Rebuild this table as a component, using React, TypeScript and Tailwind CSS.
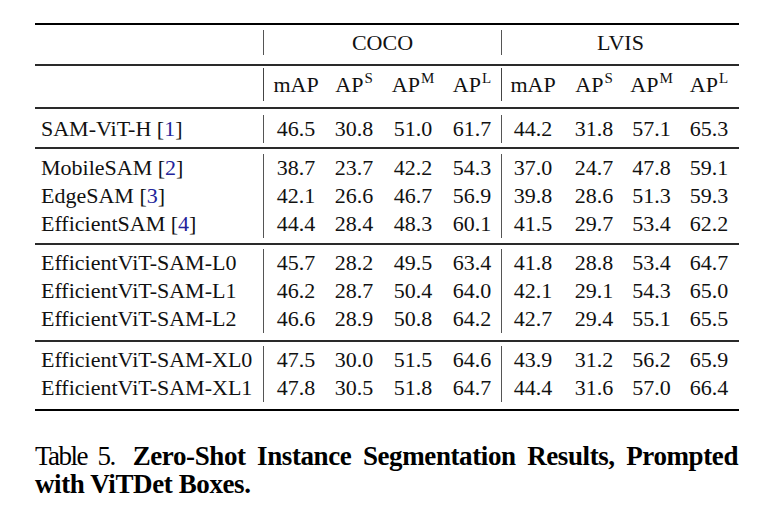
import React from "react";

type Row = { name: string; cite?: string; coco: string[]; lvis: string[] };

// column widths tuned so the figures sit under their headers
const cocoW = ["w-[64px]", "w-[52px]", "w-[66px]", "w-[55px] pr-[3px]"];
const lvisW = ["w-[62px]", "w-[60px]", "w-[55px]", "w-[60px]"];

const groups: { rows: Row[]; pad: string }[] = [
  {
    pad: "pt-[6px] pb-[4px]",
    rows: [{ name: "SAM-ViT-H", cite: "1", coco: ["46.5", "30.8", "51.0", "61.7"], lvis: ["44.2", "31.8", "57.1", "65.3"] }],
  },
  {
    pad: "pt-[5px] pb-[5px]",
    rows: [
      { name: "MobileSAM", cite: "2", coco: ["38.7", "23.7", "42.2", "54.3"], lvis: ["37.0", "24.7", "47.8", "59.1"] },
      { name: "EdgeSAM", cite: "3", coco: ["42.1", "26.6", "46.7", "56.9"], lvis: ["39.8", "28.6", "51.3", "59.3"] },
      { name: "EfficientSAM", cite: "4", coco: ["44.4", "28.4", "48.3", "60.1"], lvis: ["41.5", "29.7", "53.4", "62.2"] },
    ],
  },
  {
    pad: "pt-[4px] pb-[7px]",
    rows: [
      { name: "EfficientViT-SAM-L0", coco: ["45.7", "28.2", "49.5", "63.4"], lvis: ["41.8", "28.8", "53.4", "64.7"] },
      { name: "EfficientViT-SAM-L1", coco: ["46.2", "28.7", "50.4", "64.0"], lvis: ["42.1", "29.1", "54.3", "65.0"] },
      { name: "EfficientViT-SAM-L2", coco: ["46.6", "28.9", "50.8", "64.2"], lvis: ["42.7", "29.4", "55.1", "65.5"] },
    ],
  },
  {
    pad: "pt-[4px] pb-[7px]",
    rows: [
      { name: "EfficientViT-SAM-XL0", coco: ["47.5", "30.0", "51.5", "64.6"], lvis: ["43.9", "31.2", "56.2", "65.9"] },
      { name: "EfficientViT-SAM-XL1", coco: ["47.8", "30.5", "51.8", "64.7"], lvis: ["44.4", "31.6", "57.0", "66.4"] },
    ],
  },
];

const heads = [
  { t: "mAP" },
  { t: "AP", s: "S" },
  { t: "AP", s: "M" },
  { t: "AP", s: "L" },
];

function Head({ t, s }: { t: string; s?: string }) {
  return (
    <span>
      {t}
      {s && <sup className="text-[15px] -top-[9px] ml-[1px]">{s}</sup>}
    </span>
  );
}

function MidRule() {
  return <div className="h-[2px] bg-[#2a2a2a]" />;
}

function DataRow({ row }: { row: Row }) {
  return (
    <div className="flex h-[28px] leading-[28px]">
      <div className="w-[228px] pl-[6px] whitespace-nowrap">
        {row.name}
        {row.cite && (
          <>
            {" ["}
            <span className="text-[#23239a]">{row.cite}</span>
            {"]"}
          </>
        )}
      </div>
      <div className="flex border-l border-[#555]">
        {row.coco.map((v, i) => (
          <div key={i} className={`${cocoW[i]} text-center`}>
            {v}
          </div>
        ))}
      </div>
      <div className="flex border-l border-[#555]">
        {row.lvis.map((v, i) => (
          <div key={i} className={`${lvisW[i]} text-center`}>
            {v}
          </div>
        ))}
      </div>
    </div>
  );
}

export default function App() {
  return (
    <div className="w-[768px] h-[522px] bg-white text-[#111] font-['Liberation_Serif',serif] pt-[23px] px-[35px] overflow-hidden">
      <div className="w-[704px] text-[22px]">
        <div className="h-[2px] bg-black" />

        <div className="flex pt-[5px] pb-[9px] leading-[25px]">
          <div className="w-[228px]" />
          <div className="w-[238px] border-l border-[#555] text-center">COCO</div>
          <div className="w-[238px] border-l border-[#555] text-center">LVIS</div>
        </div>

        <MidRule />

        <div className="flex pt-[2px] pb-[6px] h-[41px] leading-[33px]">
          <div className="w-[228px]" />
          <div className="flex border-l border-[#444]">
            {heads.map((h, i) => (
              <div key={i} className={`${cocoW[i]} text-center`}>
                <Head {...h} />
              </div>
            ))}
          </div>
          <div className="flex border-l border-[#444]">
            {heads.map((h, i) => (
              <div key={i} className={`${lvisW[i]} text-center`}>
                <Head {...h} />
              </div>
            ))}
          </div>
        </div>

        {groups.map((g, gi) => (
          <div key={gi}>
            <MidRule />
            <div className={g.pad}>
              {g.rows.map((r) => (
                <DataRow key={r.name} row={r} />
              ))}
            </div>
          </div>
        ))}

        <div className="h-[2px] bg-black" />
      </div>

      <div className="mt-[31px] w-[703px] text-[27px] leading-[28px] text-black">
        <div className="text-justify [text-align-last:justify]">
          <span className="tracking-[-1.5px]">Table 5.</span>{" "}
          <span className="ml-[6px] font-bold tracking-[-0.4px]">Zero-Shot Instance Segmentation Results, Prompted</span>
        </div>
        <div className="font-bold tracking-[-0.4px]">with ViTDet Boxes.</div>
      </div>
    </div>
  );
}
